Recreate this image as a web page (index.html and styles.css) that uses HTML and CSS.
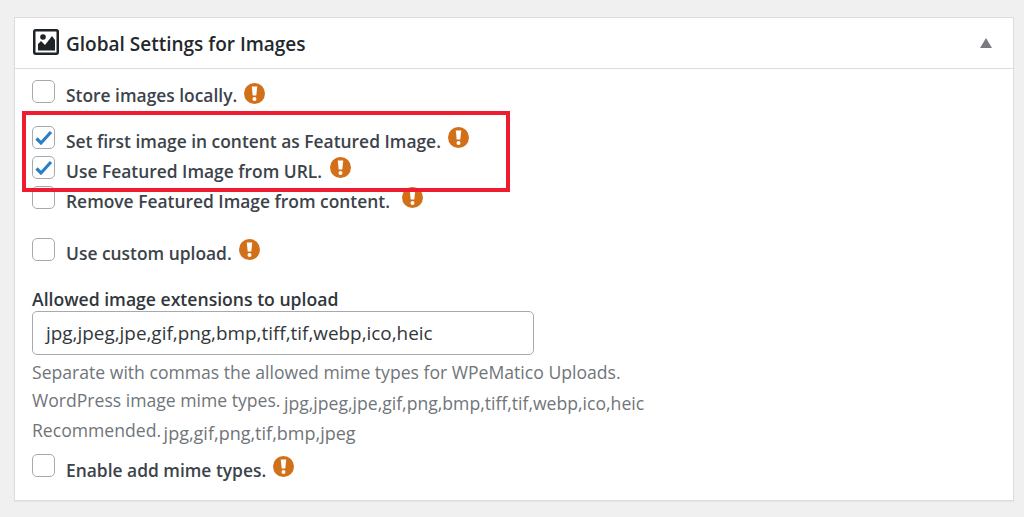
FILE: index.html
```html
<!DOCTYPE html>
<html lang="en">
<head>
<meta charset="utf-8">
<title>Global Settings for Images</title>
<link rel="stylesheet" href="styles.css">
</head>
<body>
<svg class="defs" width="0" height="0" aria-hidden="true">
  <symbol id="warn" viewBox="0 0 20 20">
    <circle cx="10" cy="10" r="10" fill="#d2701a"/>
    <path d="M7.400 3.400h5.200l-.9 8.600H8.300z" fill="#fff"/>
    <circle cx="10" cy="15.200" r="1.900" fill="#fff"/>
  </symbol>
  <symbol id="tick" viewBox="0 0 21 21">
    <path d="M3.500 11.500L8 16 18 5" fill="none" stroke="#2c7fc4" stroke-width="3.200"/>
  </symbol>
</svg>
<section class="panel">
  <header class="panel-head">
    <svg class="head-icon" viewBox="0 0 26 26" aria-hidden="true">
      <rect x="1.250" y="1.250" width="23.500" height="23.500" rx="1.500" fill="#fff" stroke="#1d2327" stroke-width="2.500"/>
      <path d="M5 21.500V15l3-3 4 4 7-9 3 4v10.500z" fill="#1d2327"/>
      <circle cx="10" cy="8" r="2.800" fill="#1d2327"/>
    </svg>
    <h2 class="panel-title">Global Settings for Images</h2>
    <span class="toggle"></span>
  </header>
  <div class="panel-body">
    <div class="opt opt-1"><span class="box"></span><span class="lbl">Store images locally.</span><svg class="warn warn-1"><use href="#warn"/></svg></div>
    <div class="opt opt-2"><span class="box"><svg><use href="#tick"/></svg></span><span class="lbl">Set first image in content as Featured Image.</span><svg class="warn"><use href="#warn"/></svg></div>
    <div class="opt opt-3"><span class="box"><svg><use href="#tick"/></svg></span><span class="lbl">Use Featured Image from URL.</span><svg class="warn warn-3"><use href="#warn"/></svg></div>
    <div class="opt opt-4"><span class="box"></span><span class="lbl">Remove Featured Image from content.</span><svg class="warn warn-far"><use href="#warn"/></svg></div>
    <div class="opt opt-5"><span class="box"></span><span class="lbl">Use custom upload.</span><svg class="warn"><use href="#warn"/></svg></div>
    <div class="field-label">Allowed image extensions to upload</div>
    <div class="ext-input">jpg,jpeg,jpe,gif,png,bmp,tiff,tif,webp,ico,heic</div>
    <p class="help help-1">Separate with commas the allowed mime types for WPeMatico Uploads.</p>
    <p class="help help-2">WordPress image mime types. <span class="mono">jpg,jpeg,jpe,gif,png,bmp,tiff,tif,webp,ico,heic</span></p>
    <p class="help help-3">Recommended. <span class="mono mono-2">jpg,gif,png,tif,bmp,jpeg</span></p>
    <div class="opt opt-6"><span class="box"></span><span class="lbl">Enable add mime types.</span><svg class="warn warn-6"><use href="#warn"/></svg></div>
  </div>
  <div class="highlight"></div>
</section>
</body>
</html>
```
FILE: styles.css
```css
* { box-sizing: border-box; }
html, body { margin: 0; height: 517px; overflow: hidden; }
body {
  background: #f0f0f1;
  padding: 17px 10px 0 14px;
  font-family: "Open Sans", "Noto Sans", sans-serif;
  color: #3c434a;
}
.defs { position: absolute; }
.panel {
  position: relative;
  height: 484px;
  background: #fff;
  border: 1px solid #dcdcde;
  box-shadow: 0 1px 1px rgba(0,0,0,.04);
}
.panel-head {
  display: flex;
  align-items: center;
  height: 51px;
  padding: 0 21px 0 18px;
  border-bottom: 1px solid #dcdcde;
}
.head-icon { width: 26px; height: 26px; margin: 0 7px 2px 0; flex: none; }
.panel-title {
  flex: 1;
  margin: 2px 0 0;
  font-size: 19px;
  font-weight: 600;
  color: #23282d;
}
.toggle {
  width: 0; height: 0;
  border-left: 6px solid transparent;
  border-right: 6px solid transparent;
  border-bottom: 10px solid #787c82;
}
.panel-body { padding: 11px 0 0 17px; }
.opt { display: flex; align-items: flex-start; height: 23px; }
.box {
  flex: none;
  display: block;
  width: 23px; height: 23px;
  background: #fff;
  border: 1px solid #a7aaad;
  border-radius: 5px;
  margin-right: 11px;
}
.box svg { display: block; width: 21px; height: 21px; }
.lbl {
  font-size: 17.400px;
  font-weight: 600;
  line-height: 22px;
  margin-top: 4px;
  white-space: nowrap;
}
.opt-6 .lbl { margin-top: 5px; }
.warn { width: 21px; height: 21px; margin: 1px 0 0 7px; flex: none; }
.warn-1 { margin-top: 3px; }
.warn-3 { margin: 1px 0 0 8px; }
.warn-6 { margin-top: 2px; }
.warn-far { margin-left: 12px; }
.opt-2 { margin-top: 23px; }
.opt-3 { margin-top: 7px; }
.opt-4 { margin-top: 7px; }
.opt-5 { margin-top: 29px; }
.field-label {
  margin-top: 27px;
  font-size: 17.600px;
  font-weight: 600;
  line-height: 22px;
  color: #32373c;
}
.ext-input {
  width: 502px;
  height: 44px;
  margin-top: 1px;
  padding: 0 13px;
  border: 1px solid #a7aaad;
  border-radius: 5px;
  font-size: 18.900px;
  line-height: 42px;
  color: #32373c;
}
.help {
  margin: 0;
  font-size: 17.600px;
  line-height: 22px;
  color: #70757a;
  white-space: nowrap;
}
.mono { position: relative; top: 3px; margin-left: -1px; }
.mono-2 { font-size: 18px; margin-left: -2px; }
.help-1 { margin-top: 6px; }
.help-2 { margin-top: 6px; }
.help-3 { margin-top: 8px; }
.opt-6 { margin-top: 13px; }
.highlight {
  position: absolute;
  left: 7px; top: 93px;
  width: 488px; height: 81px;
  border: 4px solid #ee1c2e;
}
```
